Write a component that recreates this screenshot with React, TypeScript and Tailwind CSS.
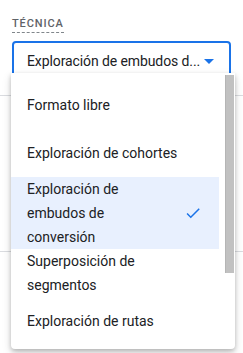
const options = [
  { label: 'Formato libre' },
  { label: 'Exploración de cohortes' },
  { label: 'Exploración de embudos de conversión', selected: true },
  { label: 'Superposición de segmentos' },
  { label: 'Exploración de rutas' },
]

function Check() {
  return (
    <svg width="18" height="18" viewBox="0 0 24 24" fill="#1a73e8">
      <path d="M9 16.17L4.83 12l-1.42 1.41L9 19 21 7l-1.41-1.41z" />
    </svg>
  )
}

export default function App() {
  return (
    <div className="relative h-[353px] w-[243px] overflow-hidden bg-white font-['Roboto',sans-serif] text-[#202124]">
      <div className="px-3 pt-[10px]">
        <span className="inline-block border-b border-dashed border-[#80868b] pb-[2px] text-[11px] font-medium leading-[13px] tracking-[0.9px] text-[#5f6368]">
          TÉCNICA
        </span>
      </div>
      <div className="mx-3 mt-[7px] flex h-[41px] items-center justify-between rounded-[4px] border-2 border-[#1a73e8] pl-[13px] pr-[15px]">
        <span className="whitespace-nowrap text-[14px] tracking-[-0.1px]">Exploración de embudos d...</span>
        <span className="ml-1 h-0 w-0 shrink-0 border-x-[5px] border-t-[5px] border-x-transparent border-t-[#1a73e8]" />
      </div>
      <div className="mt-[13px] border-t border-[#dadce0]" />
      <div className="h-[155px]" />
      <div className="border-t border-[#dadce0]" />
      <div className="h-[105px]" />
      <div className="border-t border-[#dadce0]" />

      <div className="absolute left-[11px] top-[73px] flex h-[276px] w-[224px] rounded-b-[4px] bg-white shadow-[0_2px_4px_rgba(0,0,0,0.2),0_4px_10px_rgba(0,0,0,0.15)]">
        <ul className="flex-1 pt-2">
          {options.map((o) => (
            <li
              key={o.label}
              className={`flex min-h-12 items-center justify-between pl-4 pr-[17px] text-[14px] leading-6 ${
                o.selected ? 'bg-[#e8f0fe]' : ''
              }`}
            >
              <span className={o.selected ? 'w-[120px]' : ''}>{o.label}</span>
              {o.selected && <Check />}
            </li>
          ))}
        </ul>
        <div className="w-4 pl-[6px] pr-[1px] pt-[2px]">
          <div className="h-[198px] border-l border-[#b5b5b5] bg-[#c1c1c1]" />
        </div>
      </div>
    </div>
  )
}
